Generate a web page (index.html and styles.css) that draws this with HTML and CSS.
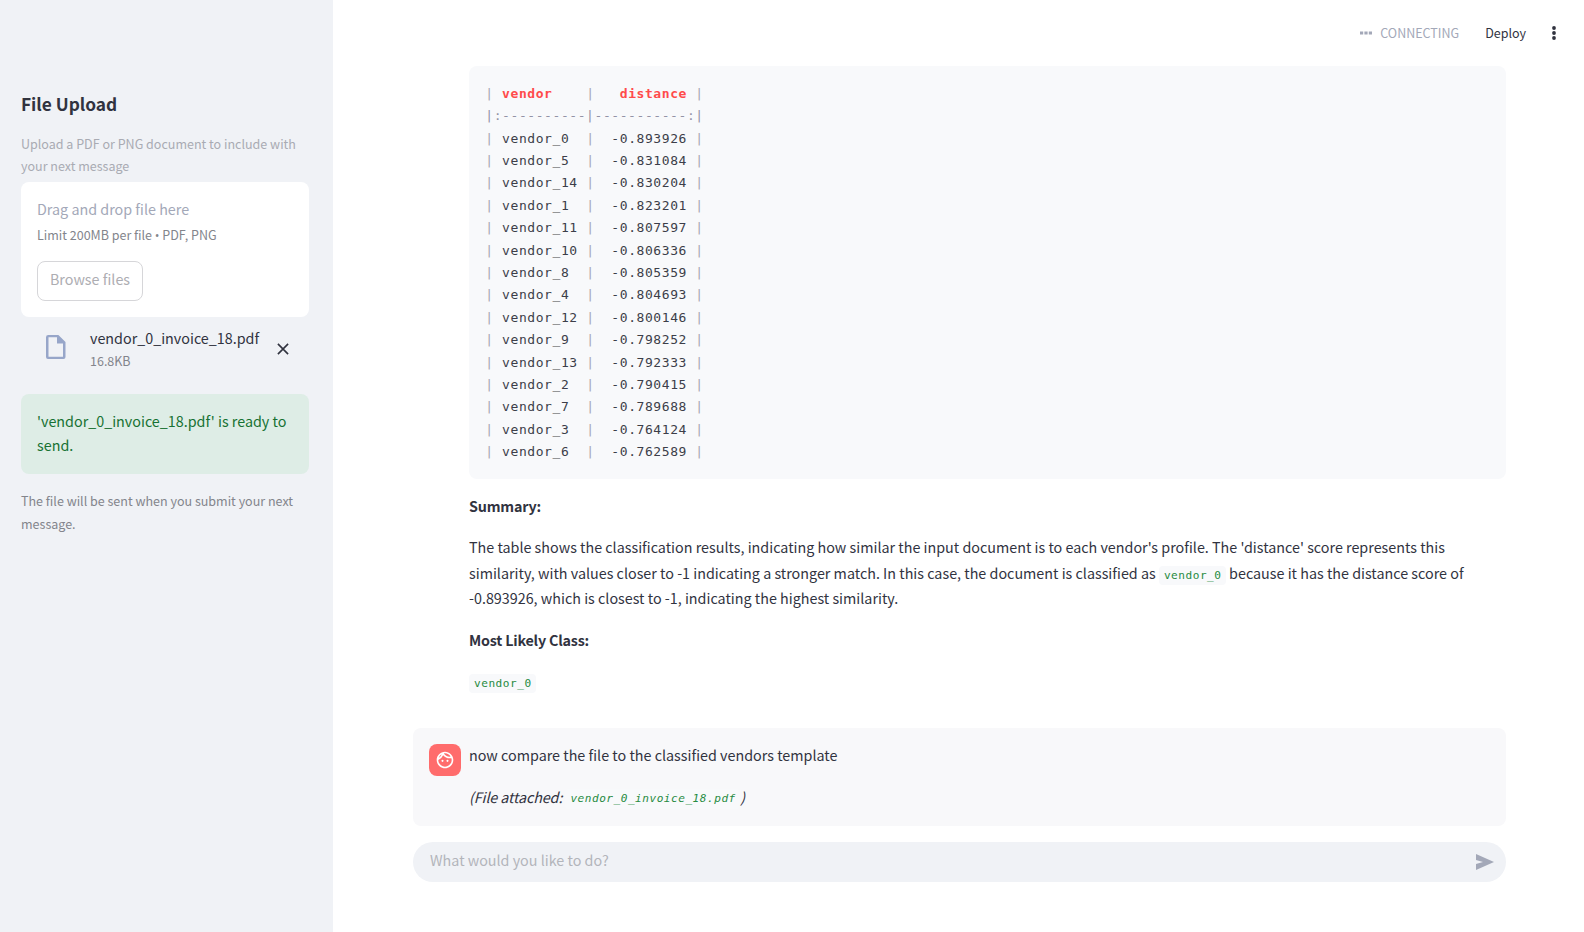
FILE: index.html
```html
<!DOCTYPE html>
<html lang="en">
<head>
<meta charset="utf-8">
<title>File Upload</title>
<link rel="stylesheet" href="styles.css">
</head>
<body>
<div class="app">
  <aside class="sidebar">
    <h3 class="title">File Upload</h3>
    <p class="caption faded">Upload a PDF or PNG document to include with<br>your next message</p>
    <section class="dropzone">
      <div class="drop-label">Drag and drop file here</div>
      <div class="drop-limit">Limit 200MB per file <span class="bullet">•</span> PDF, PNG</div>
      <button class="browse">Browse files</button>
    </section>
    <div class="file">
      <svg class="file-icon" width="20" height="24" viewBox="0 0 20 24"><path d="M2.3 0H12.4L19.5 7V22q0 2-2 2H2q-2 0-2-2V2.2Q0 0 2.3 0ZM2.5 2.3V21.7H17V8.6H11V2.3Z" fill="#97a6c9" fill-rule="evenodd"/></svg>
      <div class="file-text">
        <div class="file-name">vendor_0_invoice_18.pdf</div>
        <div class="file-size">16.8KB</div>
      </div>
      <svg class="close" width="12" height="12" viewBox="0 0 12 12"><path d="M.9.9 11.1 11.1M11.1.9.9 11.1" stroke="#31333f" stroke-width="1.6" fill="none"/></svg>
    </div>
    <div class="alert">'vendor_0_invoice_18.pdf' is ready to<br>send.</div>
    <p class="caption after">The file will be sent when you submit your next<br>message.</p>
  </aside>
  <main class="main">
    <header class="toolbar">
      <svg class="dots" width="12" height="4" viewBox="0 0 12 4" fill="#a3a8b8"><path d="M0 .4h3.2v3.2H0zM4.4.4h3.2v3.2H4.4zM8.8.4H12v3.2H8.8z"/></svg>
      <span class="status">CONNECTING</span>
      <span class="deploy">Deploy</span>
      <svg class="menu" width="4" height="14" viewBox="0 0 4 14" fill="#31333f"><circle cx="2" cy="2" r="1.9"/><circle cx="2" cy="7" r="1.9"/><circle cx="2" cy="12" r="1.9"/></svg>
    </header>
    <div class="thread">
      <article class="assistant">
<pre class="code"><i>|</i> <b>vendor</b>    <i>|</i>   <b>distance</b> <i>|</i>
<i class="rule">|:----------|-----------:|</i>
<i>|</i> vendor_0  <i>|</i>  -0.893926 <i>|</i>
<i>|</i> vendor_5  <i>|</i>  -0.831084 <i>|</i>
<i>|</i> vendor_14 <i>|</i>  -0.830204 <i>|</i>
<i>|</i> vendor_1  <i>|</i>  -0.823201 <i>|</i>
<i>|</i> vendor_11 <i>|</i>  -0.807597 <i>|</i>
<i>|</i> vendor_10 <i>|</i>  -0.806336 <i>|</i>
<i>|</i> vendor_8  <i>|</i>  -0.805359 <i>|</i>
<i>|</i> vendor_4  <i>|</i>  -0.804693 <i>|</i>
<i>|</i> vendor_12 <i>|</i>  -0.800146 <i>|</i>
<i>|</i> vendor_9  <i>|</i>  -0.798252 <i>|</i>
<i>|</i> vendor_13 <i>|</i>  -0.792333 <i>|</i>
<i>|</i> vendor_2  <i>|</i>  -0.790415 <i>|</i>
<i>|</i> vendor_7  <i>|</i>  -0.789688 <i>|</i>
<i>|</i> vendor_3  <i>|</i>  -0.764124 <i>|</i>
<i>|</i> vendor_6  <i>|</i>  -0.762589 <i>|</i></pre>
        <p><strong>Summary:</strong></p>
        <p>The table shows the classification results, indicating how similar the input document is to each vendor's profile. The 'distance' score represents this<br>similarity, with values closer to -1 indicating a stronger match. In this case, the document is classified as <code>vendor_0</code> because it has the distance score of<br>-0.893926, which is closest to -1, indicating the highest similarity.</p>
        <p><strong>Most Likely Class:</strong></p>
        <p class="result"><code>vendor_0</code></p>
      </article>
      <article class="user">
        <div class="avatar"><svg width="20" height="20" viewBox="0 0 24 24" fill="#fff"><path d="M10.25 13a1.25 1.25 0 1 1-2.5 0 1.25 1.25 0 0 1 2.5 0ZM15 11.75a1.25 1.25 0 1 0 0 2.5 1.25 1.25 0 0 0 0-2.5ZM22 12c0 5.52-4.48 10-10 10S2 17.52 2 12 6.48 2 12 2s10 4.480 10 10ZM10.660 4.120C12.060 6.440 14.600 8 17.500 8c.46 0 .91-.05 1.340-.12C17.440 5.560 14.900 4 12 4c-.46 0-.91.05-1.340.12ZM4.420 9.470A8.046 8.046 0 0 0 8.080 5.030a8.046 8.046 0 0 0-3.660 4.440ZM20 12c0-.78-.12-1.530-.33-2.240-.7.150-1.420.24-2.170.24a10 10 0 0 1-7.760-3.690A10.016 10.016 0 0 1 4 11.860c.01.04 0 .09 0 .14 0 4.410 3.590 8 8 8s8-3.590 8-8Z"/></svg></div>
        <div class="user-text">
          <p>now compare the file to the classified vendors template</p>
          <p><em>(File attached: <code>vendor_0_invoice_18.pdf</code>)</em></p>
        </div>
      </article>
      <div class="prompt">
        <span>What would you like to do?</span>
        <svg width="18" height="16" viewBox="0 0 18 16"><path d="M0 0 18 8 0 16V10L7 8 0 6Z" fill="#a3a8b8"/></svg>
      </div>
    </div>
  </main>
</div>
</body>
</html>
```
FILE: styles.css
```css
* { box-sizing: border-box; }
body { margin: 0; background: #fff; color: #31333f; font-family: "Noto Sans CJK SC", sans-serif; font-size: 14.33px; line-height: 25.6px; white-space: nowrap; }
p { margin: 0; }
.app { display: flex; height: 932px; overflow: hidden; }
.sidebar { width: 333px; flex: none; background: #f0f2f6; padding: 89px 24px 0 21px; }
.title { margin: 0; font-size: 17.3px; line-height: 30px; font-weight: 600; }
.caption { font-size: 12.53px; line-height: 22.4px; color: #83858c; }
.faded { color: #a9abb3; margin-top: 14px; }
.dropzone { height: 135px; margin-top: 4px; background: #fff; border-radius: 8px; padding: 15px 16px; }
.drop-label { line-height: 24px; color: #a3a8b8; }
.drop-limit { font-size: 12.5px; line-height: 20px; margin-top: 4px; color: #83858c; }
.bullet { font-family: "Open Sans", sans-serif; line-height: 1; }
.browse { display: block; width: 106px; height: 40px; margin-top: 16px; padding: 0 0 3px; background: #fff; border: 1px solid #d6d6d9; border-radius: 8px; font: inherit; line-height: 34px; color: #adadb2; }
.file { display: flex; height: 77px; padding: 18px 20px 0 25px; }
.file-text { margin: -9px 0 0 24px; flex: 1; }
.file-name { line-height: 24px; }
.file-size { font-size: 12.5px; line-height: 20px; margin-top: 1px; color: #83858c; }
.close { margin-top: 8px; }
.alert { height: 80px; padding: 15px 16px; border-radius: 8px; background: #deede6; color: #177233; line-height: 24px; }
.after { margin-top: 15px; line-height: 23px; }
.main { flex: 1; }
.toolbar { height: 66px; display: flex; align-items: center; justify-content: flex-end; padding-right: 28px; font-size: 12.5px; }
.status { margin-left: 8px; color: #a3a8b8; }
.deploy { margin: 0 26px; }
.thread { width: 1093px; margin-left: 80px; }
.assistant { padding-left: 56px; height: 662px; }
.assistant p { margin-top: 16px; }
.assistant .code + p { margin-top: 13.6px; }
.assistant .result { margin-top: 15.4px; }
.code { margin: 0; height: 413px; padding: 16.8px 16.3px; background: #f8f9fb; border-radius: 8px; color: #3c3e49; font: 13px/22.4px "DejaVu Sans Mono", monospace; letter-spacing: .574px; }
.code i { font-style: normal; color: #a5a5b1; }
.code .rule { color: #9393a6; }
.code b { color: #ff4b4b; }
strong { font-weight: 600; letter-spacing: -.2px; }
code { font: 11.1px/18px "DejaVu Sans Mono", monospace; letter-spacing: .52px; color: #278b42; background: #f8f9fb; border-radius: 4px; padding: 3.2px 4.4px 3.2px 5px; }
em { letter-spacing: -.1px; }
em code { font-style: italic; letter-spacing: .51px; }
.user { display: flex; gap: 8px; height: 98px; padding: 16px; background: #f8f8fa; border-radius: 8px; }
.avatar { width: 32px; height: 32px; border-radius: 8px; background: #ff6c6c; display: flex; align-items: center; justify-content: center; }
.user-text { margin-top: -2px; }
.user-text p + p { margin-top: 16px; }
.prompt { display: flex; align-items: center; justify-content: space-between; height: 40px; margin-top: 16px; padding: 0 12px 0 17px; border-radius: 20px; background: #f0f2f6; color: #b3b5bb; }
.prompt span { margin-bottom: 4px; }
```
